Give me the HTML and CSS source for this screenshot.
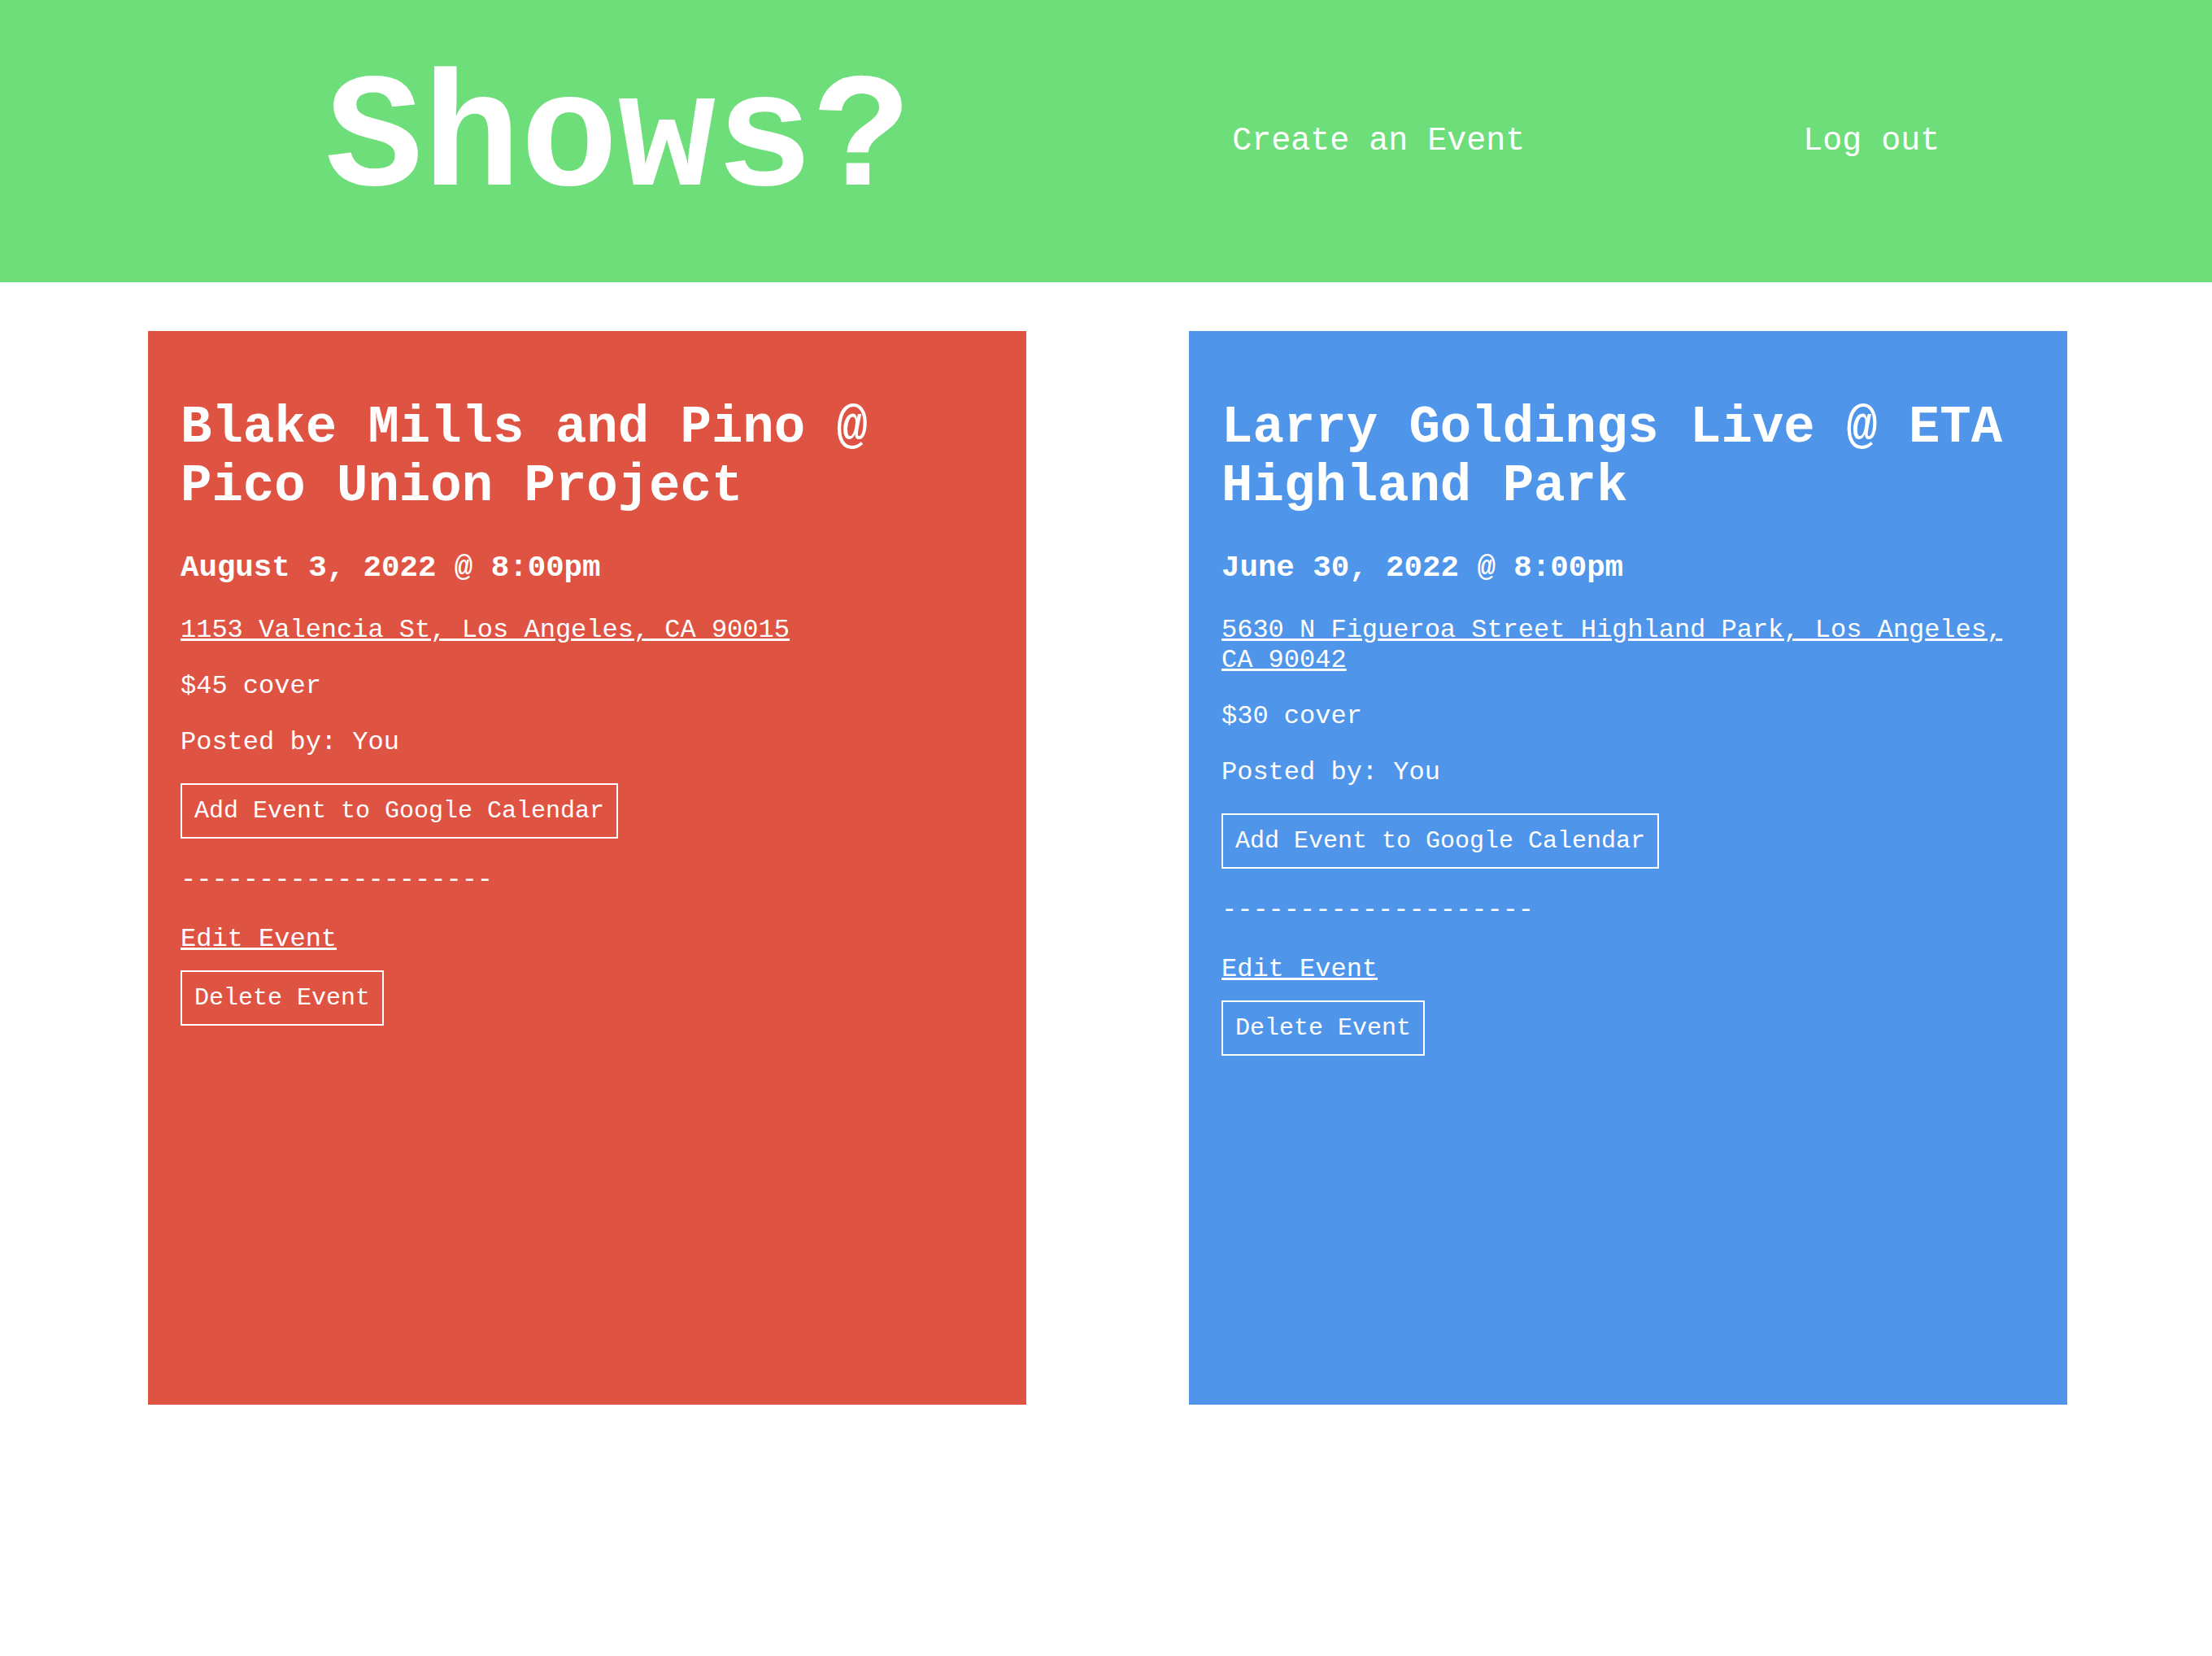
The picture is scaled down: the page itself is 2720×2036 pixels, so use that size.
FILE: index.html
```html
<!DOCTYPE html>
<html lang="en">
<head>
<meta charset="utf-8">
<title>Shows?</title>
<link rel="stylesheet" href="styles.css">
</head>
<body>
<header class="site-header">
  <h1 class="brand">Shows?</h1>
  <nav class="nav">
    <a class="nav-link" href="#">Create an Event</a>
    <a class="nav-link" href="#">Log out</a>
  </nav>
</header>
<main class="events">
  <article class="card card-red">
    <h1 class="card-title">Blake Mills and Pino @ Pico Union Project</h1>
    <h3 class="card-date">August 3, 2022 @ 8:00pm</h3>
    <p class="card-text"><a class="card-link" href="#">1153 Valencia St, Los Angeles, CA 90015</a></p>
    <p class="card-text">$45 cover</p>
    <p class="card-text">Posted by: You</p>
    <button class="btn btn-cal">Add Event to Google Calendar</button>
    <p class="card-text divider">--------------------</p>
    <p class="card-text edit-row"><a class="card-link" href="#">Edit Event</a></p>
    <button class="btn">Delete Event</button>
  </article>
  <article class="card card-blue">
    <h1 class="card-title">Larry Goldings Live @ ETA Highland Park</h1>
    <h3 class="card-date">June 30, 2022 @ 8:00pm</h3>
    <p class="card-text"><a class="card-link" href="#">5630 N Figueroa Street Highland Park, Los Angeles, CA 90042</a></p>
    <p class="card-text">$30 cover</p>
    <p class="card-text">Posted by: You</p>
    <button class="btn btn-cal">Add Event to Google Calendar</button>
    <p class="card-text divider">--------------------</p>
    <p class="card-text edit-row"><a class="card-link" href="#">Edit Event</a></p>
    <button class="btn">Delete Event</button>
  </article>
</main>
</body>
</html>
```
FILE: styles.css
```css
html, body {
  margin: 0;
  padding: 0;
  background: #ffffff;
}

body {
  font-family: "Courier New", "Liberation Mono", monospace;
  font-size: 32px;
  color: #ffffff;
}

.site-header {
  display: flex;
  align-items: center;
  background: #6ede7b;
  padding: 60px 0 60px 400px;
}

.brand {
  margin: 0;
  font-size: 200px;
  font-weight: bold;
  line-height: normal;
  color: #ffffff;
}

.nav {
  display: flex;
  align-items: center;
  gap: 342px;
  margin-left: 395px;
}

.nav-link {
  font-size: 40px;
  color: #ffffff;
  text-decoration: none;
}

.events {
  display: flex;
  align-items: flex-start;
  gap: 200px;
  padding: 60px 0 0 182px;
}

.card {
  box-sizing: border-box;
  width: 1080px;
  height: 1320px;
  padding: 40px;
  color: #ffffff;
}

.card-red {
  background: #df5343;
}

.card-blue {
  background: #4f96ea;
}

.card-title {
  font-size: 64px;
  font-weight: bold;
  line-height: normal;
  margin: 0.67em 0;
}

.card-date {
  font-size: 37.44px;
  font-weight: bold;
  line-height: normal;
  margin: 1em 0;
}

.card-text {
  font-size: 32px;
  line-height: normal;
  margin: 32px 0;
}

.card-link {
  color: #ffffff;
  text-decoration: underline;
}

.btn {
  display: block;
  font-family: "Courier New", "Liberation Mono", monospace;
  font-size: 30px;
  line-height: normal;
  color: #ffffff;
  background: transparent;
  border: 2px solid #ffffff;
  padding: 15px;
  margin: 0;
  cursor: pointer;
}

.divider {
  margin-bottom: 36px;
}

.edit-row {
  margin: 0 0 20px;
}
```
